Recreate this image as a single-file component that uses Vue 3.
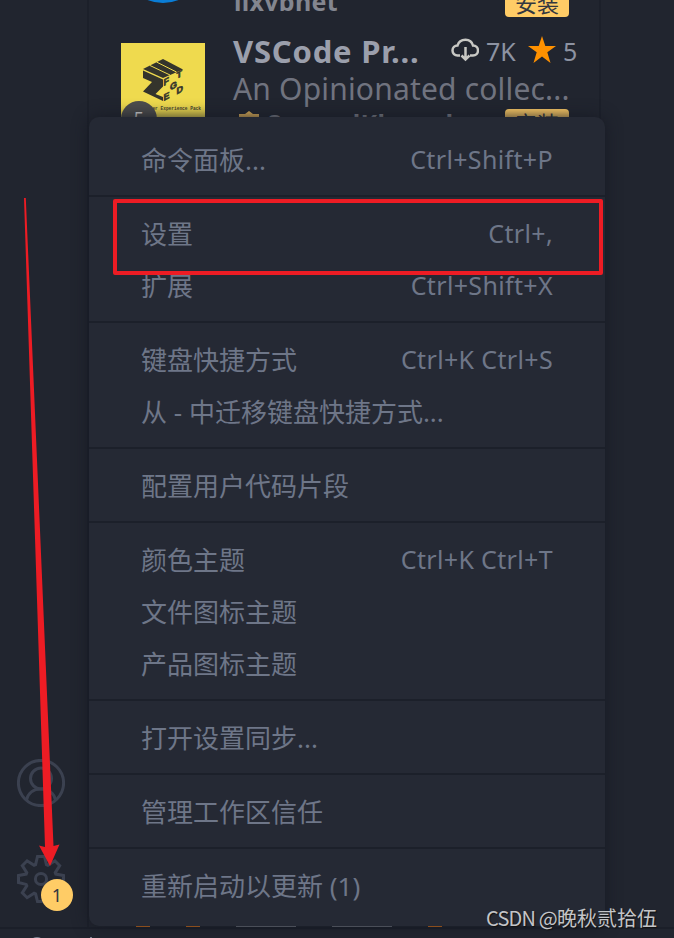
<script setup>
import { ref } from 'vue'

const updates = ref(1)

const groups = [
    [{ label: '命令面板...', keys: 'Ctrl+Shift+P' }],
    [
        { label: '设置', keys: 'Ctrl+,' },
        { label: '扩展', keys: 'Ctrl+Shift+X' }
    ],
    [
        { label: '键盘快捷方式', keys: 'Ctrl+K Ctrl+S' },
        { label: '从 - 中迁移键盘快捷方式...' }
    ],
    [{ label: '配置用户代码片段' }],
    [
        { label: '颜色主题', keys: 'Ctrl+K Ctrl+T' },
        { label: '文件图标主题' },
        { label: '产品图标主题' }
    ],
    [{ label: '打开设置同步...' }],
    [{ label: '管理工作区信任' }],
    [{ label: '重新启动以更新 (1)' }]
]

// letters on the right face of the cube
const cubeLetters = [
    { char: 'F', x: 42.5, y: 43 },
    { char: 'T', x: 55.5, y: 36 },
    { char: 'G', x: 49, y: 47.5 },
    { char: 'E', x: 42.5, y: 58 },
    { char: 'D', x: 55.5, y: 51.5 }
]
</script>

<template>
    <div class="window">
        <div class="workbench">
            <nav class="activity-bar">
                <svg class="activity-icon" viewBox="0 0 48 48">
                    <circle cx="24" cy="24" r="22.6" />
                    <circle cx="24" cy="19.5" r="10.5" />
                    <path d="M9.500 41C11 34 16.500 30 24 30s13 4 14.500 11" />
                </svg>
                <div class="manage">
                    <svg class="activity-icon" viewBox="0 0 48 48">
                        <path d="M20.500 1.500h7l1.900 8.200 1.500.6 7-4.500 4.800 4.800-4.500 7 .6 1.500 7.700 1.400v7l-7.700 1.900-.6 1.500 4.500 7-4.800 4.800-7-4.500-1.500.6-1.900 7.700h-7l-1.900-7.700-1.500-.6-7 4.500-4.800-4.800 4.500-7-.6-1.500-7.700-1.900v-7l7.700-1.400.6-1.500-4.500-7 4.800-4.800 7 4.500 1.500-.6z" />
                        <circle cx="24" cy="24" r="5.600" />
                    </svg>
                    <span class="count">{{ updates }}</span>
                </div>
            </nav>

            <aside class="sidebar">
                <div class="extension first">
                    <div class="round-logo"></div>
                    <div class="info">
                        <div class="publisher-row">
                            <span class="publisher">lixvbnet</span>
                            <span class="install">安装</span>
                        </div>
                    </div>
                </div>
                <div class="extension">
                    <div class="logo">
                        <svg viewBox="0 0 84 84">
                            <path class="cube" d="M42 16l20 10.500L42 35 22 26z" />
                            <path class="cube" d="M22 27.500l20 9v7L34.500 51l7.500 3v4L22 48.500l9-9.500-9-4z" />
                            <path class="cut" d="M29 22.500L49 32M35.500 19l20 10" />
                            <text v-for="l in cubeLetters" :key="l.char" :transform="`translate(${l.x} ${l.y}) skewY(-28)`">{{ l.char }}</text>
                        </svg>
                        <span class="pack-title">Developer Experience Pack</span>
                        <span class="pack-count">5</span>
                    </div>
                    <div class="info">
                        <div class="name-row">
                            <span class="name">VSCode Pr...</span>
                            <svg class="cloud" viewBox="0 0 28 24">
                                <path d="M9 17.500H6.500a5 5 0 0 1 0-10C7.500 4 10.500 1.800 14.500 1.800s6.500 2 7.500 5.700a5 5 0 0 1 0 10h-3M14.500 9v12M10.500 17.500l4 4 4-4" />
                            </svg>
                            <span class="stat installs">7K</span>
                            <svg class="star" viewBox="0 0 28 27">
                                <path d="M14 0l3.300 10H28l-8.700 6.300L22.500 27 14 20.500 5.500 27l3.200-10.700L0 10h10.700z" />
                            </svg>
                            <span class="stat">5</span>
                        </div>
                        <div class="desc">An Opinionated collec...</div>
                        <div class="publisher-row">
                            <svg class="verified" viewBox="0 0 24 24">
                                <path d="M12 0l4 3h6v6l2 3-2 3v6h-6l-4 3-4-3H2v-6l-2-3 2-3V3h6z" />
                            </svg>
                            <span class="publisher">SamuelKlaus.dev</span>
                            <span class="install">安装</span>
                        </div>
                    </div>
                </div>
            </aside>
            <main class="editor"></main>
        </div>
        <footer class="status-bar"><i class="dot"></i><i class="tick"></i></footer>

        <div class="menu">
            <div v-for="(group, i) in groups" :key="i" class="menu-group">
                <div v-for="item in group" :key="item.label" class="menu-item">
                    <span>{{ item.label }}</span>
                    <span class="menu-keys">{{ item.keys }}</span>
                </div>
            </div>
        </div>
        <div class="menu-edge"><i></i><i></i><i class="grey"></i><i class="grey"></i><i></i></div>

        <div class="highlight"></div>
        <svg class="arrow" viewBox="0 0 674 938">
            <path d="M24 198h1.800L53.500 846l6-1.500L50 866 39 845.500l6 1.500z" />
        </svg>
        <div class="watermark"><span>CSDN @</span>晚秋贰拾伍</div>
    </div>
</template>

<style>
body {
    background: #21252f;
    overflow: hidden;
}
</style>

<style scoped>
.window {
    position: relative;
    display: flex;
    flex-direction: column;
    width: 674px;
    height: 938px;
    overflow: hidden;
    background: #21252f;
    color: #6e7688;
    font-family: "Noto Sans", "Noto Sans CJK SC", sans-serif;
}

.workbench {
    display: flex;
    height: 927px;
}

/* activity bar */
.activity-bar {
    box-sizing: border-box;
    width: 89px;
    padding: 0 0 24px 17px;
    display: flex;
    flex-direction: column;
    justify-content: flex-end;
    gap: 48px;
    border-right: 2px solid #1c202a;
}

.activity-icon {
    display: block;
    width: 48px;
    height: 48px;
    fill: none;
    stroke: #3b4150;
    stroke-width: 3;
}

.manage {
    position: relative;
}

.count {
    position: absolute;
    left: 24px;
    top: 24px;
    width: 32px;
    height: 32px;
    border-radius: 50%;
    background: #ffcc66;
    color: #333740;
    font-size: 18px;
    line-height: 32px;
    text-align: center;
}

/* extension list */
.sidebar {
    box-sizing: border-box;
    width: 512px;
    padding: 0 0 0 32px;
    border-right: 2px solid #1c202a;
}

.extension {
    display: flex;
    gap: 28px;
    height: 144px;
    padding-top: 12px;
}

.extension.first {
    height: 31px;
    padding-top: 0;
    overflow: hidden;
}

.round-logo {
    flex: none;
    width: 84px;
    height: 84px;
    margin-top: -81px;
    border-radius: 50%;
    background: #0a7dd6;
}

.first .info {
    margin-top: -13px;
}

.first .publisher {
    margin: -5px 0 0 1px;
}

.logo {
    position: relative;
    flex: none;
    width: 84px;
    height: 84px;
    overflow: hidden;
    background: #efda4e;
}

.logo svg {
    display: block;
}

.logo .cube {
    fill: #34342c;
}

.logo .cut {
    fill: none;
    stroke: #efda4e;
    stroke-width: 1;
}

.logo text {
    fill: #34342c;
    stroke: #34342c;
    stroke-width: 0.6;
    font: bold 9px "Liberation Sans", sans-serif;
}

.pack-title {
    position: absolute;
    right: 4px;
    top: 63px;
    color: #4a4630;
    font: bold 4.5px/6px "Liberation Mono", monospace;
    white-space: nowrap;
}

.pack-count {
    position: absolute;
    left: 0;
    top: 58px;
    width: 36px;
    height: 36px;
    border-radius: 50%;
    background: #4d4d4d;
    color: #ddd;
    font-size: 18px;
    line-height: 34px;
    text-align: center;
}

.info {
    flex: none;
    width: 345px;
}

.name-row {
    display: flex;
    align-items: center;
    height: 37px;
    margin-top: -11px;
    white-space: nowrap;
}

.name {
    flex: none;
    width: 218px;
    color: #9b9fac;
    font-size: 31px;
    font-weight: bold;
    letter-spacing: 0.8px;
}

.cloud {
    flex: none;
    width: 28px;
    height: 24px;
    margin-top: -2px;
    fill: none;
    stroke: #c8c8c4;
    stroke-width: 2.5;
}

.stat {
    color: #8d93a2;
    font-size: 25px;
}

.installs {
    flex: none;
    width: 42px;
    margin-left: 7px;
}

.star {
    flex: none;
    width: 28px;
    height: 27px;
    margin-right: 7px;
    margin-top: -3px;
    fill: #ff9100;
}

.desc {
    height: 36px;
    padding-top: 2px;
    color: #70737f;
    font-size: 30px;
    line-height: 36px;
    letter-spacing: 0.18px;
    white-space: nowrap;
}

.publisher-row {
    display: flex;
    align-items: center;
    width: 336px;
    height: 28px;
    margin-top: 2px;
}

.verified {
    width: 24px;
    height: 24px;
    margin: 0 6px 0 4px;
    fill: #e8b75b;
}

.publisher {
    color: #83868f;
    font-size: 25px;
    font-weight: bold;
    letter-spacing: 0.3px;
}

.install {
    width: 64px;
    height: 28px;
    margin-left: auto;
    border-radius: 4px;
    background: #ffcc66;
    color: #333740;
    font-size: 22px;
    line-height: 29px;
    text-align: center;
}

.editor {
    flex: 1;
}

.status-bar {
    position: relative;
    height: 9px;
    overflow: hidden;
    border-top: 2px solid #1b1f29;
}

.dot {
    position: absolute;
    left: 29px;
    top: 8px;
    width: 16px;
    height: 16px;
    border-radius: 50%;
    background: #7b8190;
}

.tick {
    position: absolute;
    left: 90px;
    top: 8px;
    width: 2px;
    height: 2px;
    background: #7b8190;
}

/* context menu */
.menu {
    position: absolute;
    left: 89px;
    top: 117px;
    box-sizing: border-box;
    width: 516px;
    height: 809px;
    padding: 6px 0;
    border-radius: 10px;
    background: #252934;
    box-shadow: 0 0 16px #171a24;
}

.menu-group {
    padding: 11px 0 9px;
}

.menu-group + .menu-group {
    border-top: 2px solid #1c202a;
}

.menu-item {
    display: flex;
    justify-content: space-between;
    height: 52px;
    padding: 0 52px;
    font-size: 26px;
    line-height: 52px;
    white-space: nowrap;
}

.menu-keys {
    font-size: 25px;
    line-height: 50px;
    letter-spacing: 0.35px;
}

/* tops of the row hidden below the menu */
.menu-edge {
    position: absolute;
    left: 136px;
    top: 926px;
    display: flex;
    gap: 36px;
}

.menu-edge i {
    width: 14px;
    height: 1px;
    background: #8b4d1c;
}

.menu-edge .grey {
    width: 60px;
    background: #4a4e58;
}

/* annotations */
.highlight {
    position: absolute;
    left: 113px;
    top: 199px;
    box-sizing: border-box;
    width: 490px;
    height: 76px;
    border: 4px solid #ed1c24;
    border-radius: 2px;
}

.arrow {
    position: absolute;
    left: 0;
    top: 0;
    width: 674px;
    height: 938px;
    fill: #ed1c24;
}

.watermark {
    position: absolute;
    left: 486px;
    top: 904px;
    color: #c3c4c7;
    font: 20px/28px "Noto Sans CJK SC", sans-serif;
    white-space: nowrap;
    text-shadow: 1px 1px 1px #111;
}

.watermark span {
    letter-spacing: -0.8px;
}
</style>
